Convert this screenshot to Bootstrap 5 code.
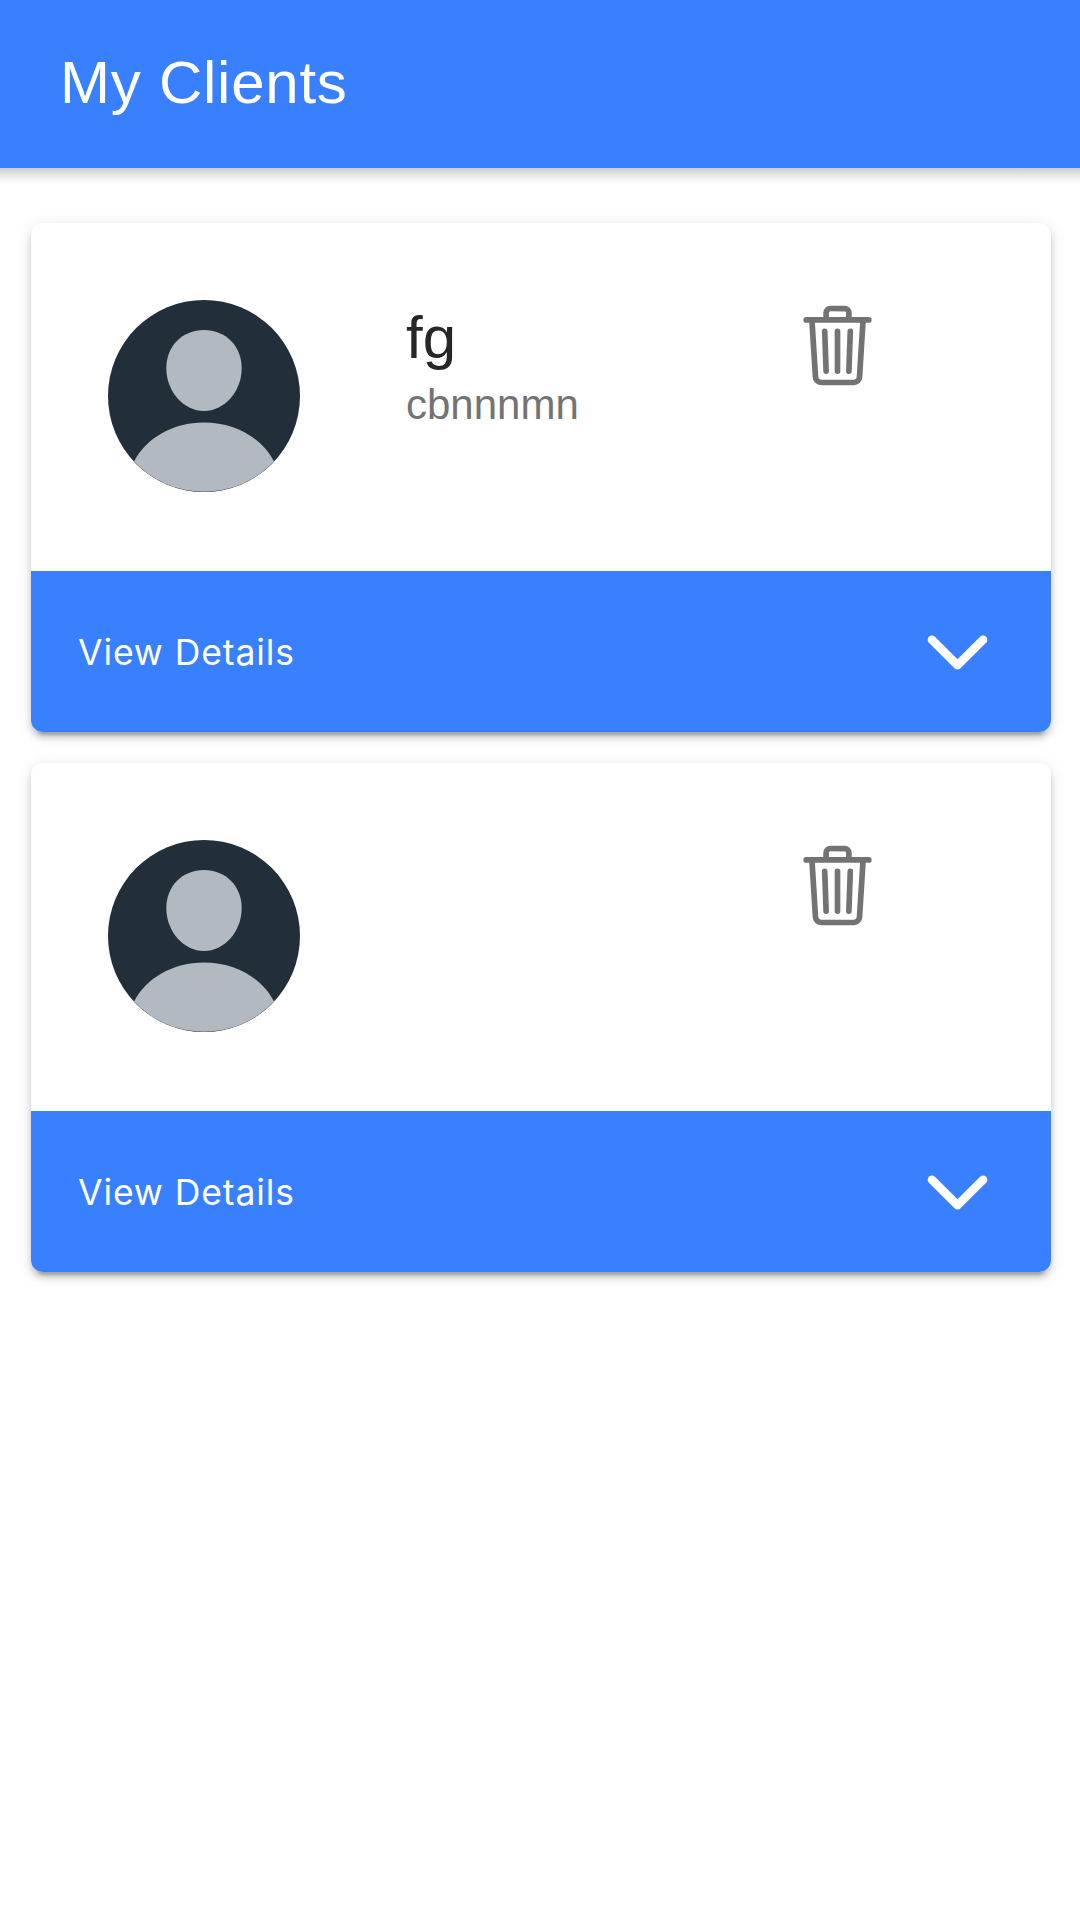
<!DOCTYPE html>
<html lang="en">
<head>
<meta charset="utf-8">
<meta name="viewport" content="width=device-width, initial-scale=1">
<title>My Clients</title>
<link href="https://cdn.jsdelivr.net/npm/bootstrap@5.3.0/dist/css/bootstrap.min.css" rel="stylesheet">
<style>
body { font-family: "Liberation Sans", Arial, sans-serif; background: #fff; min-height: 1920px; }
.app-bar { height: 168px; padding: 0 60px 2px; background: #3880ff; }
.app-bar h1 { font-size: 60px; line-height: 72px; letter-spacing: .75px; font-weight: 400; color: #fff; }
.bar-shade { height: 16px; background: linear-gradient(#cdcdcd, #dedede 30%, #f4f4f4 65%, #fff); }
.client-list { padding: 39px 29px 0 31px; gap: 31px; }
.client-card { height: 509px; border: 0; border-radius: 12px; box-shadow: 0 9px 3px -6px rgba(0,0,0,.2), 0 6px 6px rgba(0,0,0,.14), 0 3px 15px rgba(0,0,0,.12); }
.client-info { height: 348px; padding: 77px 0 0 77px; }
.avatar { width: 192px; height: 192px; }
.client-text { width: 386px; margin-left: 106px; padding-top: 2px; }
.client-name { font-size: 60px; line-height: 72px; color: #262626; }
.client-note { margin-top: 7px; font-size: 42px; line-height: 48px; color: #737373; }
.icon { width: 91px; height: 91px; fill: none; stroke: currentColor; stroke-width: 32; stroke-linecap: round; stroke-linejoin: round; }
.trash { color: #737373; }
.details { height: 161px; border: 0; border-radius: 0 0 12px 12px; background: #3880ff; color: #fff; padding: 2px 48px 0 47px; }
.details-label { font-family: Inter, sans-serif; font-size: 35.5px; letter-spacing: .9px; line-height: 54px; margin-top: 1px; }
.chevron { stroke-width: 48; }
</style>
</head>
<body>
<header>
  <div class="app-bar d-flex align-items-center"><h1 class="m-0">My Clients</h1></div>
  <div class="bar-shade"></div>
</header>

<svg width="0" height="0" class="d-none">
  <symbol id="person" viewBox="0 0 192 192">
    <circle cx="96" cy="96" r="96" fill="#222e3a"/>
    <path fill="#b2b9c1" d="M96 30C118 30 133.700 46.500 133.700 68C133.700 92 116 111 96 111C76 111 58.300 92 58.300 68C58.300 46.500 74 30 96 30Z"/>
    <path fill="#b2b9c1" d="M26 161.500C38 138 65 122.500 96 122.500S154 138 166 161.500A96 96 0 0 1 26 161.500Z"/>
  </symbol>
  <symbol id="trash" viewBox="0 0 512 512">
    <path d="M112 112l20 320c.95 18.490 14.400 32 32 32h184c17.670 0 30.870-13.510 32-32l20-320M80 112h352M192 112V72a23.930 23.930 0 0 1 24-24h80a23.930 23.930 0 0 1 24 24v40M256 176v224M184 176l8 224M328 176l-8 224"/>
  </symbol>
  <symbol id="chevron" viewBox="0 0 512 512"><path d="M112 184l144 144 144-144"/></symbol>
</svg>

<main class="client-list d-flex flex-column">
  <article class="card client-card">
    <div class="client-info d-flex align-items-start">
      <svg class="avatar flex-shrink-0"><use href="#person"/></svg>
      <div class="client-text flex-shrink-0">
        <div class="client-name">fg</div>
        <div class="client-note">cbnnnmn</div>
      </div>
      <svg class="icon trash flex-shrink-0"><use href="#trash"/></svg>
    </div>
    <button type="button" class="details w-100 d-flex align-items-center justify-content-between">
      <span class="details-label">View Details</span>
      <svg class="icon chevron"><use href="#chevron"/></svg>
    </button>
  </article>

  <article class="card client-card">
    <div class="client-info d-flex align-items-start">
      <svg class="avatar flex-shrink-0"><use href="#person"/></svg>
      <div class="client-text flex-shrink-0"></div>
      <svg class="icon trash flex-shrink-0"><use href="#trash"/></svg>
    </div>
    <button type="button" class="details w-100 d-flex align-items-center justify-content-between">
      <span class="details-label">View Details</span>
      <svg class="icon chevron"><use href="#chevron"/></svg>
    </button>
  </article>
</main>
<script src="https://cdn.jsdelivr.net/npm/bootstrap@5.3.0/dist/js/bootstrap.bundle.min.js"></script>
</body>
</html>
